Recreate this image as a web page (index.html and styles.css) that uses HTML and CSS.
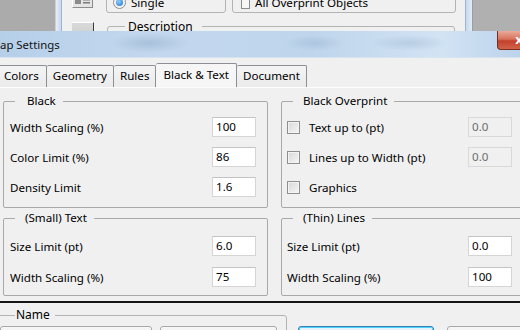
FILE: index.html
```html
<!DOCTYPE html>
<html>
<head>
<meta charset="utf-8">
<link rel="stylesheet" href="styles.css">
</head>
<body>
<div class="screen">
  <div class="bgwin">
    <div class="bg-desk"></div>
    <div class="bg-frame"></div>
    <div class="bg-client">
      <div class="bg-row1">
        <div class="bg-iconbtn">
          <svg width="17" height="12" viewBox="0 0 17 12">
            <rect x="1" y="1" width="6" height="9" fill="#8a8a8a"/>
            <rect x="2" y="2" width="4" height="3" fill="#c9c9c9"/>
            <rect x="9" y="2" width="7" height="1.5" fill="#7a7a7a"/>
            <rect x="9" y="5" width="7" height="1.5" fill="#7a7a7a"/>
            <rect x="9" y="8" width="7" height="1.5" fill="#7a7a7a"/>
          </svg>
        </div>
        <div class="bg-group bg-radio-group">
          <div class="bg-opt"><span class="bg-radio"><span class="bg-dot"></span></span><span>Single</span></div>
        </div>
        <div class="bg-group bg-check-group">
          <div class="bg-opt"><span class="bg-check"></span><span>All Overprint Objects</span></div>
        </div>
      </div>
      <div class="bg-row2">
        <div class="bg-iconbtn2"></div>
        <fieldset class="bg-desc"><legend>Description</legend></fieldset>
      </div>
    </div>
    <div class="bg-frame bg-frame-r"></div>
    <div class="bg-desk bg-desk-r"></div>
  </div>

  <div class="titlebar">
    <span class="title">ap Settings</span>
    <div class="close"><span>x</span></div>
  </div>

  <div class="tabs">
    <div class="tab tab-first">Colors</div>
    <div class="tab">Geometry</div>
    <div class="tab">Rules</div>
    <div class="tab tab-active">Black &amp; Text</div>
    <div class="tab">Document</div>
  </div>

  <div class="tabpanel">
    <fieldset class="grp grp-top">
      <legend class="lg-black">Black</legend>
      <div class="row"><span>Width Scaling (%)</span><span class="field">100</span></div>
      <div class="row"><span>Color Limit (%)</span><span class="field">86</span></div>
      <div class="row"><span>Density Limit</span><span class="field">1.6</span></div>
    </fieldset>
    <fieldset class="grp grp-top grp-right">
      <legend class="lg-right">Black Overprint</legend>
      <div class="row"><span class="chk-label"><span class="chk"></span>Text up to (pt)</span><span class="field field-dis">0.0</span></div>
      <div class="row"><span class="chk-label"><span class="chk"></span>Lines up to Width (pt)</span><span class="field field-dis">0.0</span></div>
      <div class="row"><span class="chk-label"><span class="chk"></span>Graphics</span></div>
    </fieldset>
    <fieldset class="grp grp-bot">
      <legend class="lg-small">(Small) Text</legend>
      <div class="row"><span>Size Limit (pt)</span><span class="field">6.0</span></div>
      <div class="row"><span>Width Scaling (%)</span><span class="field">75</span></div>
    </fieldset>
    <fieldset class="grp grp-bot grp-right">
      <legend class="lg-right">(Thin) Lines</legend>
      <div class="row"><span>Size Limit (pt)</span><span class="field">0.0</span></div>
      <div class="row"><span>Width Scaling (%)</span><span class="field">100</span></div>
    </fieldset>
  </div>

  <div class="divider"></div>

  <div class="bottom">
    <fieldset class="name-grp">
      <legend>Name</legend>
      <div class="name-row">
        <div class="box box-a"></div>
        <div class="box box-b"></div>
      </div>
    </fieldset>
    <div class="btn-blue"></div>
    <div class="box box-c"></div>
  </div>
</div>
</body>
</html>
```

FILE: styles.css
```css
* { box-sizing: border-box; }
html, body { margin: 0; padding: 0; }
body {
  width: 520px;
  height: 330px;
  overflow: hidden;
  background: #f0f0f0;
  font-family: "Noto Sans", "Open Sans", sans-serif;
  font-size: 11.6px;
  color: #000;
}
.screen {
  width: 520px;
  height: 330px;
  overflow: hidden;
  display: flex;
  flex-direction: column;
}

/* background window strip */
.bgwin { height: 31px; flex: none; display: flex; }
.bg-desk { width: 56px; background: #ababab; border-right: 1px solid #cfcfcf; }
.bg-desk-r { width: 48px; border-right: none; border-left: 1px solid #9d9d9d; background: #b0b0b0; }
.bg-frame {
  width: 6px;
  background: linear-gradient(to right, #e6eef7, #c6d9ee);
  border-right: 1px solid #9fb4ca;
}
.bg-frame-r { width: 7px; border-right: none; border-left: 1px solid #9fb4ca; background: linear-gradient(to right, #c6d9ee, #e1ebf6); }
.bg-client { width: 403px; background: #f0f0f0; overflow: hidden; display: flex; flex-direction: column; }
.bg-row1 { height: 13px; flex: none; display: flex; align-items: flex-end; }
.bg-iconbtn {
  width: 21px;
  height: 22px;
  margin-left: 10px;
  margin-bottom: 5px;
  border: 1px solid #8c8c8c;
  border-top-color: #fff;
  border-left-color: #fff;
  background: #e4e4e4;
  display: flex;
  align-items: flex-end;
  justify-content: center;
  padding-bottom: 1px;
}
.bg-iconbtn svg { display: block; }
.bg-group {
  height: 30px;
  border: 1px solid #b3b3b3;
  border-radius: 3px;
  display: flex;
  align-items: flex-end;
  padding-bottom: 2px;
}
.bg-radio-group { width: 120px; margin-left: 13px; padding-left: 6px; }
.bg-check-group { width: 224px; margin-left: 6px; padding-left: 7px; }
.bg-opt { display: flex; align-items: center; gap: 5px; height: 16px; }
.bg-radio {
  width: 13px; height: 13px; border-radius: 50%;
  border: 1px solid #8d8d8d;
  background: #f4f4f4;
  display: flex; align-items: center; justify-content: center;
}
.bg-dot { width: 7px; height: 7px; border-radius: 50%; background: radial-gradient(circle at 40% 35%, #8fd0ff, #1b6fc4); }
.bg-check { width: 9px; height: 13px; border: 1px solid #8d8d8d; background: #f7f7f7; margin-left: 1px; }
.bg-row2 { margin-top: 5px; display: flex; align-items: flex-start; }
.bg-iconbtn2 {
  width: 22px;
  height: 14px;
  margin-left: 10px;
  margin-top: 4px;
  background: linear-gradient(#d9d9d9, #cfcfcf);
  border-right: 1px solid #3a3a3a;
  border-top: 1px solid #fff;
}
.bg-desc {
  margin: 0 0 0 13px;
  width: 348px;
  height: 30px;
  padding: 0;
  border: 1px solid #b3b3b3;
  border-radius: 3px;
}
.bg-desc legend {
  margin-left: 17px;
  padding: 0 9px 0 3px;
  line-height: 17px;
  font-size: 12px;
}

/* dialog title bar */
.titlebar {
  height: 27px;
  flex: none;
  display: flex;
  align-items: center;
  overflow: hidden;
  background:
    radial-gradient(ellipse 40px 10px at 150px 12px, rgba(120,150,185,0.35), transparent),
    radial-gradient(ellipse 30px 8px at 315px 12px, rgba(120,150,185,0.25), transparent),
    radial-gradient(ellipse 40px 8px at 410px 12px, rgba(120,150,185,0.25), transparent),
    linear-gradient(to right, #b6cfe9, #c3d8ee 30%, #bed5ec 60%, #d2e3f4 85%, #bcd3eb);
  border-bottom: 1px solid #d6e3f0;
}
.title { font-size: 11.4px; color: #111; padding-left: 0; }
.close {
  align-self: flex-start;
  margin-left: auto;
  margin-right: -20px;
  width: 43px;
  height: 19px;
  border: 1px solid #7a2b1e;
  border-top: none;
  border-radius: 0 0 4px 4px;
  background: linear-gradient(#e9ab9a, #d8735d 45%, #c2402a 55%, #d1634a);
  color: #fff;
  font-weight: bold;
  font-size: 13px;
  line-height: 16px;
  text-align: center;
  padding-left: 1px;
}

/* tabs */
.tabs {
  height: 30px;
  flex: none;
  display: flex;
  align-items: flex-end;
  border-bottom: 1px solid #fdfdfd;
}
.tab {
  height: 22px;
  line-height: 20px;
  padding: 0 6px;
  border: 1px solid #8c8f96;
  border-left: none;
  border-bottom: none;
  border-radius: 2px 2px 0 0;
  background: linear-gradient(#f4f4f4, #ebebeb);
  white-space: nowrap;
}
.tab-first { margin-left: -3px; border-left: 1px solid #8c8f96; padding-right: 7px; }
.tab-active { height: 24px; line-height: 22px; background: #f6f6f6; padding: 0 7px; }

/* tab panel */
.tabpanel {
  height: 213px;
  flex: none;
  display: grid;
  grid-template-columns: 265px 250px;
  grid-template-rows: auto auto;
  column-gap: 13px;
  row-gap: 2px;
  padding: 5px 0 0 3px;
  align-content: start;
  overflow: hidden;
}
.grp {
  margin: 0;
  min-width: 0;
  border: 1px solid #a9a9a9;
  border-radius: 2px;
  padding: 8px 11px 10px 6px;
  display: flex;
  flex-direction: column;
  gap: 10px;
}
.grp legend { line-height: 16px; margin-left: 5px; padding: 0 7px 0 12px; }
.grp .lg-small { padding: 0 7px 0 10px; }
.grp-right { padding-left: 5px; padding-right: 18px; }
.grp .lg-right { margin-left: 6px; padding: 0 7px 0 10px; }
.grp-bot { padding-top: 10px; padding-bottom: 8px; gap: 11px; }
.row {
  height: 20px;
  display: flex;
  align-items: center;
  justify-content: space-between;
  white-space: nowrap;
}
.field {
  width: 44px;
  height: 20px;
  background: #fff;
  border: 1px solid #d5d5d5;
  border-top-color: #c4c4c4;
  padding-left: 3px;
  line-height: 17px;
}
.field-dis { background: #f0f0f0; color: #6d6d6d; border-color: #d9d9d9; }
.chk-label { display: flex; align-items: center; gap: 9px; }
.chk {
  width: 13px;
  height: 13px;
  border: 1px solid #8e8f8f;
  background: linear-gradient(135deg, #d8d8d8, #f6f6f6);
  box-shadow: inset 0 0 0 1px #f4f4f4;
}

.divider { height: 2px; flex: none; background: #151515; }

/* bottom background window part */
.bottom { flex: 1; display: flex; align-items: flex-start; overflow: hidden; }
.name-grp {
  margin: 4px 0 0 -10px;
  width: 297px;
  height: 40px;
  padding: 3px 0 0 0;
  border: 1px solid #b3b3b3;
  border-radius: 3px;
  flex: none;
}
.name-grp legend { margin-left: 24px; padding: 0 5px 0 1px; line-height: 16px; font-size: 12px; }
.name-row { display: flex; gap: 8px; margin-left: 9px; }
.box {
  height: 20px;
  border: 1px solid #a8a8a8;
  border-radius: 3px;
  background: #f5f5f5;
  flex: none;
}
.box-a { width: 152px; }
.box-b { width: 117px; }
.btn-blue {
  margin: 23px 0 0 11px;
  width: 136px;
  height: 22px;
  flex: none;
  border: 1px solid #3c7fb1;
  border-radius: 3px;
  background: #e5f4fc;
  box-shadow: inset 0 0 0 1px #48d6fd;
}
.box-c { margin: 23px 0 0 13px; width: 80px; }
```
